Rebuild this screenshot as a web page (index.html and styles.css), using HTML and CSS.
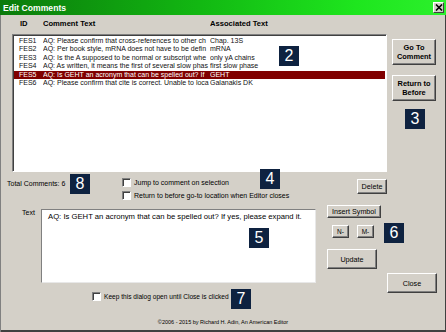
FILE: index.html
```html
<!DOCTYPE html>
<html lang="en">
<head>
  <meta charset="UTF-8" />
  <title>Edit Comments</title>
  <link rel="stylesheet" href="styles.css">
</head>
<body>
  <div class="window">
    <div class="titlebar">
      <span class="title">Edit Comments</span>
      <span class="x-btn">
        <svg width="8" height="7" viewBox="0 0 8 7"><path d="M1 0.5 L7 6.5 M7 0.5 L1 6.5" stroke="#000" stroke-width="1.6"/></svg>
      </span>
    </div>

    <!-- Liste des commentaires -->
    <div class="top">
      <div class="list-area">
        <div class="list-head">
          <span class="col-id">ID</span>
          <span class="col-text">Comment Text</span>
          <span class="col-assoc">Associated Text</span>
        </div>
        <div class="list">
          <div class="row"><span class="col-id">FES1</span><span class="col-text">AQ: Please confirm that cross-references to other ch</span><span class="col-assoc">Chap. 13S</span></div>
          <div class="row"><span class="col-id">FES2</span><span class="col-text">AQ: Per book style, mRNA does not have to be defin</span><span class="col-assoc">mRNA</span></div>
          <div class="row"><span class="col-id">FES3</span><span class="col-text">AQ: Is the A supposed to be normal or subscript whe</span><span class="col-assoc">only yA chains</span></div>
          <div class="row"><span class="col-id">FES4</span><span class="col-text">AQ: As written, it means the first of several slow phas</span><span class="col-assoc">first slow phase</span></div>
          <div class="row selected"><span class="col-id">FES5</span><span class="col-text">AQ: Is GEHT an acronym that can be spelled out? If</span><span class="col-assoc">GEHT</span></div>
          <div class="row"><span class="col-id">FES6</span><span class="col-text">AQ: Please confirm that cite is correct. Unable to loca</span><span class="col-assoc">Galanakis DK</span></div>
        </div>
      </div>
      <div class="side-btns">
        <button class="btn strong goto-btn">Go To<br>Comment</button>
        <button class="btn strong return-btn">Return to<br>Before</button>
      </div>
    </div>

    <!-- Options -->
    <div class="options">
      <div class="total">Total Comments: 6</div>
      <div class="checks">
        <label class="check"><span class="cb"></span>Jump to comment on selection</label>
        <label class="check"><span class="cb"></span>Return to before go-to location when Editor closes</label>
      </div>
      <button class="btn delete-btn">Delete</button>
    </div>

    <!-- Edition -->
    <div class="edit">
      <div class="edit-left">
        <div class="edit-row">
          <div class="text-label">Text</div>
          <div class="textbox">AQ: Is GEHT an acronym that can be spelled out? If yes, please expand it.</div>
        </div>
        <label class="check keep"><span class="cb"></span>Keep this dialog open until Close is clicked</label>
      </div>
      <div class="tools">
        <button class="btn symbol-btn">Insert Symbol</button>
        <div class="nm-row">
          <button class="btn small-btn">N-</button>
          <button class="btn small-btn">M-</button>
        </div>
        <button class="btn update-btn">Update</button>
        <button class="btn close-btn">Close</button>
      </div>
    </div>

    <div class="footer">&copy;2006 - 2015 by Richard H. Adin, An American Editor</div>

    <!-- Repères numérotés -->
    <span class="badge b2">2</span>
    <span class="badge b3">3</span>
    <span class="badge b4">4</span>
    <span class="badge b5">5</span>
    <span class="badge b6">6</span>
    <span class="badge b7">7</span>
    <span class="badge b8">8</span>
  </div>
</body>
</html>
```

FILE: styles.css
```css
body {
  margin: 0;
  padding: 0;
  font-family: "Liberation Sans", Arial, sans-serif;
  background-color: #d4d0c8;
}

.window {
  position: relative;
  width: 446px;
  height: 332px;
  box-sizing: border-box;
  background-color: #d4d0c8;
  box-shadow: inset 1px 0 #808080, inset -1px 0 #404040, inset 0 -2px #404040;
  color: #000;
  overflow: hidden;
}

/* Barre de titre */
.titlebar {
  height: 15px;
  display: flex;
  align-items: center;
  justify-content: space-between;
  padding: 0 2px 0 3px;
  background: linear-gradient(90deg, #0b7a0b 0%, #12b812 45%, #1ee61e 80%, #2cf02c 100%);
}

.title {
  color: white;
  font-weight: bold;
  font-size: 8.6px;
}

.x-btn {
  width: 11px;
  height: 11px;
  box-sizing: border-box;
  display: flex;
  align-items: center;
  justify-content: center;
  background: #d4d0c8;
  border: 1px solid;
  border-color: #fff #404040 #404040 #fff;
}

/* Liste */
.top {
  display: flex;
  height: 157px;
}

.list-area {
  margin-left: 12px;
  width: 375px;
}

.list-head {
  display: flex;
  height: 19px;
  box-sizing: border-box;
  padding: 4px 0 0 2px;
  font-weight: bold;
  font-size: 7.6px;
  line-height: 10px;
}

.list {
  height: 138px;
  box-sizing: border-box;
  background: white;
  border: 1px solid;
  border-color: #808080 #fff #fff #808080;
  box-shadow: inset 1px 1px #404040;
  padding: 2px 1px 0 1px;
}

.row {
  display: flex;
  height: 8.4px;
  line-height: 8.4px;
  font-size: 7px;
  color: #111;
  white-space: nowrap;
}

.row.selected {
  background-color: #800000;
  color: white;
}

.col-id {
  width: 29px;
  box-sizing: border-box;
  padding-left: 5px;
  flex-shrink: 0;
}

.col-text {
  width: 166px;
  margin-right: 1px;
  overflow: hidden;
  flex-shrink: 0;
}

.list-head .col-id { padding-left: 6px; }

.col-assoc {
  flex: 1;
  overflow: hidden;
}

/* Boutons */
.btn {
  display: block;
  box-sizing: border-box;
  padding: 0;
  margin: 0;
  background: #d4d0c8;
  border: 1px solid;
  border-color: #fff #404040 #404040 #fff;
  box-shadow: inset -1px -1px #808080;
  font-family: "Liberation Sans", Arial, sans-serif;
  font-size: 7.2px;
  color: #000;
  line-height: 9px;
}

.btn.strong {
  font-weight: bold;
  font-size: 7.4px;
}

.side-btns {
  margin-left: 5px;
  padding-top: 24px;
  display: flex;
  flex-direction: column;
  gap: 10px;
}

.goto-btn { width: 44px; height: 26px; }
.return-btn { width: 44px; height: 26px; }

/* Options */
.options {
  display: flex;
  height: 33px;
}

.total {
  width: 115px;
  padding-left: 7px;
  margin-top: 7px;
  font-size: 7px;
  line-height: 10px;
}

.checks {
  width: 235px;
  padding-top: 4px;
}

.check {
  display: flex;
  align-items: center;
  height: 13px;
  font-size: 7px;
  gap: 3px;
}

.cb {
  width: 9px;
  height: 9px;
  box-sizing: border-box;
  background: #fff;
  border: 1px solid;
  border-color: #808080 #fff #fff #808080;
  box-shadow: inset 1px 1px #404040;
}

.delete-btn {
  width: 30px;
  height: 15px;
  margin-top: 7px;
}

/* Zone d'édition */
.edit {
  display: flex;
  height: 105px;
}

.edit-left {
  width: 316px;
}

.edit-row {
  display: flex;
}

.text-label {
  width: 41px;
  box-sizing: border-box;
  padding: 3px 0 0 22px;
  font-size: 7px;
  line-height: 10px;
}

.textbox {
  width: 275px;
  height: 74px;
  margin-top: 4px;
  box-sizing: border-box;
  background: white;
  border: 1px solid;
  border-color: #808080 #e8e8e8 #e8e8e8 #808080;
  padding: 2px 0 0 6px;
  font-size: 7.7px;
  line-height: 10px;
  white-space: nowrap;
  overflow: hidden;
}

.keep {
  margin-top: 7px;
  padding-left: 92px;
  font-size: 6.6px;
}

.tools {
  margin-left: 11px;
  display: flex;
  flex-direction: column;
  align-items: flex-start;
}

.symbol-btn { width: 54px; height: 13px; }

.nm-row {
  display: flex;
  gap: 8px;
  margin: 7px 0 0 5px;
}

.small-btn { width: 17px; height: 13px; font-size: 6.5px; }

.update-btn { width: 50px; height: 20px; margin-top: 11px; }

.close-btn { width: 50px; height: 20px; margin: 4px 0 0 60px; }

.footer {
  margin-top: 6px;
  text-align: center;
  font-size: 5.5px;
  line-height: 12px;
}

/* Repères */
.badge {
  position: absolute;
  width: 20px;
  height: 20px;
  background: #0e2240;
  color: white;
  font-size: 16px;
  line-height: 20px;
  text-align: center;
}

.b2 { left: 279px; top: 46px; }
.b3 { left: 405px; top: 109px; }
.b4 { left: 260px; top: 169px; }
.b5 { left: 249px; top: 228px; }
.b6 { left: 384px; top: 223px; }
.b7 { left: 231px; top: 289px; }
.b8 { left: 70px; top: 174px; }
```
